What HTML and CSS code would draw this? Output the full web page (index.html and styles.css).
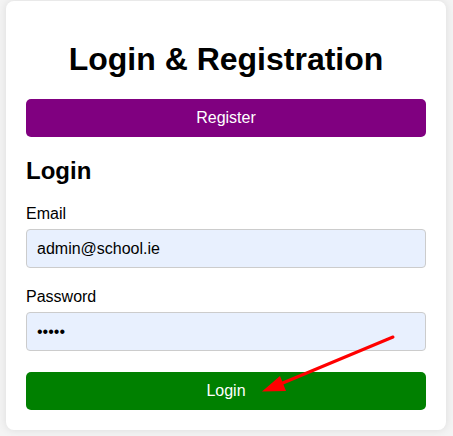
FILE: index.html
```html
<!DOCTYPE html>
<html lang="en">
<head>
<meta charset="utf-8">
<title>Login &amp; Registration</title>
<link rel="stylesheet" href="styles.css">
</head>
<body>
<div class="page">
  <div class="card">
    <h1 class="title">Login &amp; Registration</h1>
    <button class="btn btn-register" type="button">Register</button>
    <h2 class="subtitle">Login</h2>
    <form class="form">
      <label class="label" for="email">Email</label>
      <input class="input" id="email" type="email" value="admin@school.ie">
      <label class="label" for="password">Password</label>
      <input class="input" id="password" type="password" value="admin">
      <button class="btn btn-login" type="button">Login</button>
    </form>
  </div>
</div>
<svg class="annotation" width="453" height="436" viewBox="0 0 453 436">
  <line x1="393" y1="337" x2="278" y2="385" stroke="#ff0000" stroke-width="3" stroke-linecap="round"/>
  <polygon points="262,391.5 280,376 286,391" fill="#ff0000"/>
</svg>
</body>
</html>
```
FILE: styles.css
```css
html, body {
  margin: 0;
  padding: 0;
  background: #f4f4f4;
}
body {
  font-family: "Liberation Sans", Arial, sans-serif;
  position: relative;
  width: 453px;
  height: 436px;
  overflow: hidden;
}
.page {
  padding: 1px 7px 0 6px;
}
.card {
  width: 440px;
  box-sizing: border-box;
  background: #ffffff;
  padding: 20px;
  border-radius: 8px;
  box-shadow: 0 0 10px rgba(0, 0, 0, 0.1);
}
.title {
  font-size: 32px;
  font-weight: bold;
  text-align: center;
  margin: 20px 0 21px;
  color: #000;
}
.subtitle {
  font-size: 24px;
  font-weight: bold;
  margin: 20px 0;
  color: #000;
}
.btn {
  display: block;
  width: 100%;
  height: 38px;
  border: none;
  border-radius: 5px;
  color: #ffffff;
  font-family: "Liberation Sans", Arial, sans-serif;
  font-size: 16px;
  padding: 0;
  cursor: pointer;
}
.btn-register {
  background: #800080;
}
.btn-login {
  background: #008000;
  margin-top: 21px;
}
.form {
  display: block;
  margin: 0;
}
.label {
  display: block;
  font-size: 16px;
  color: #000;
  margin-bottom: 6px;
}
.input {
  display: block;
  width: 100%;
  height: 39px;
  box-sizing: border-box;
  padding: 0 10px;
  border: 1px solid #cccccc;
  border-radius: 4px;
  background: #e8f0fe;
  font-family: "Liberation Sans", Arial, sans-serif;
  font-size: 16px;
  color: #000;
  margin: 0 0 20px;
}
#password {
  margin-bottom: 0;
}
.annotation {
  position: absolute;
  left: 0;
  top: 0;
  pointer-events: none;
}
```
